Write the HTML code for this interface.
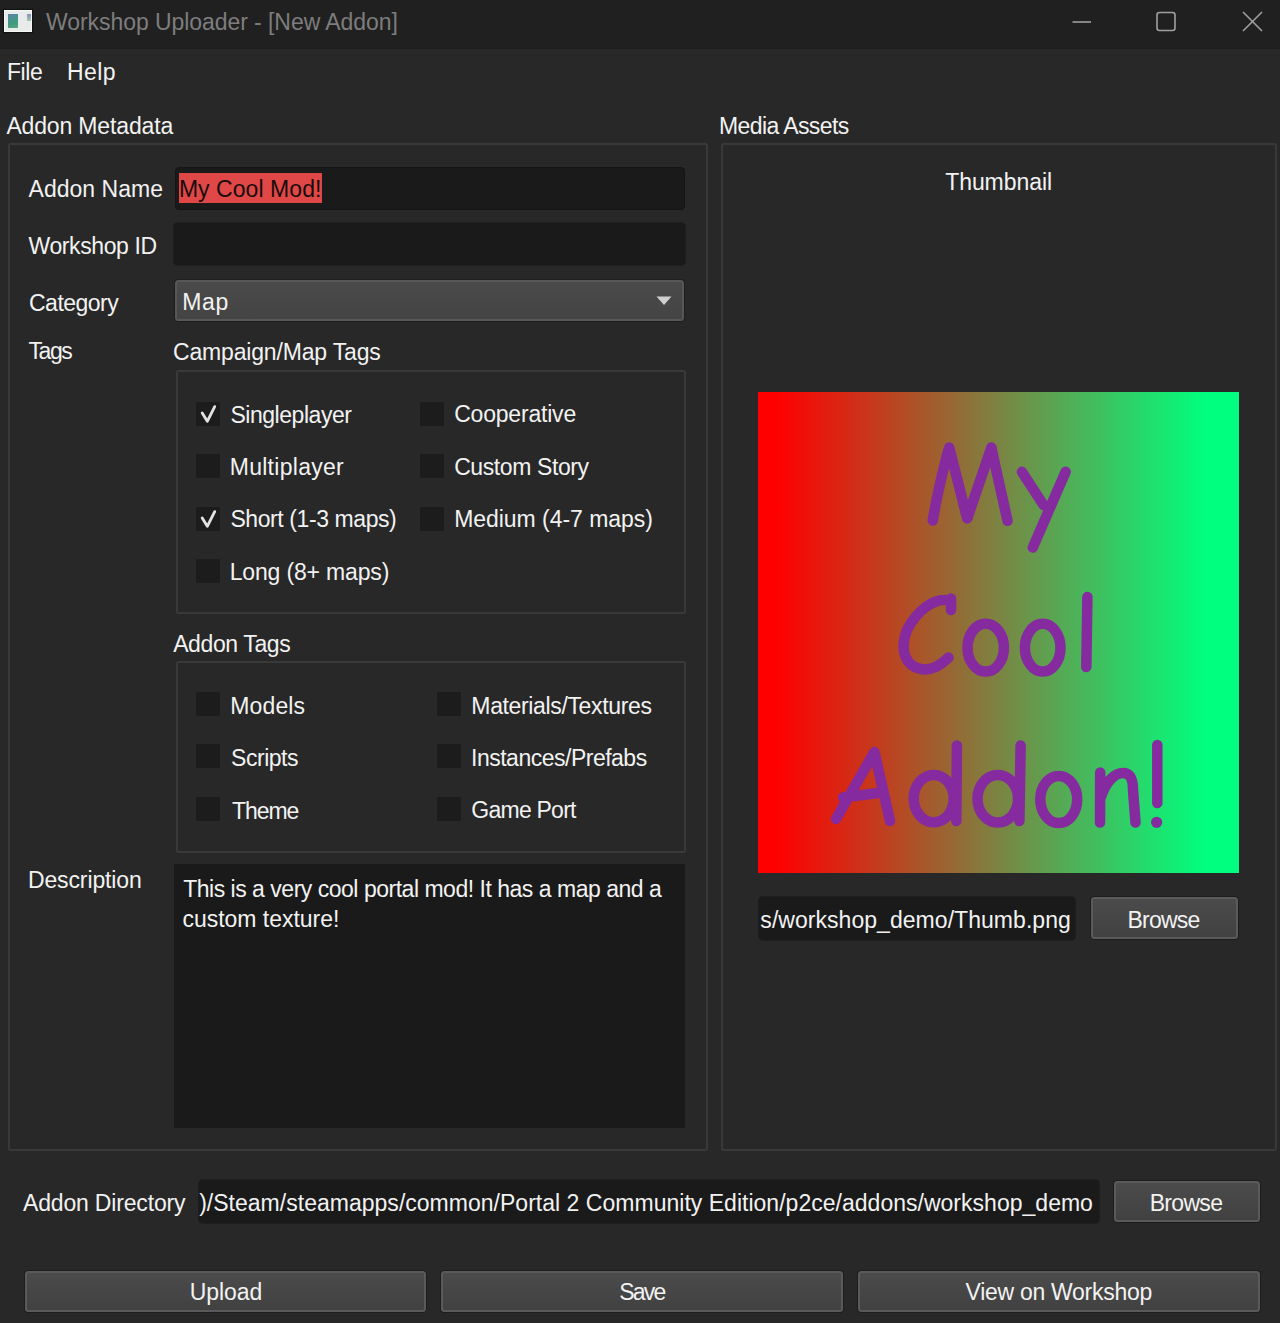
<!DOCTYPE html>
<html><head><meta charset="utf-8">
<style>
*{margin:0;padding:0;box-sizing:border-box}
html,body{width:1280px;height:1323px;overflow:hidden;background:#282828}
body{position:relative;font-family:"Liberation Sans",sans-serif;font-size:23px;color:#f2f2f2}
.a{position:absolute}
.t{position:absolute;white-space:pre;line-height:23px;height:23px}
#title{left:0;top:0;width:1280px;height:49px;background:#202020;border-bottom:1px solid #1c1c1c}
.grp{position:absolute;border:2px solid #393939;border-radius:2.5px}
.inp{position:absolute;background:#1a1a1a;border-radius:4px;box-shadow:0 0 0 1px #1e1e1e}
.btn{position:absolute;border:2px solid #5a5a5a;border-radius:3.5px;background:linear-gradient(#4b4b4b,#414141);box-shadow:0 0 0 1px #1d1d1d}
.cb{position:absolute;width:24px;height:24px;background:#1c1c1c;border-radius:1px}
.ck{position:absolute;left:0;top:0}
</style></head><body>
<div id="title" class="a"></div>
<div class="a" style="left:4.4px;top:9.6px;width:27.8px;height:22.5px;background:#e9eaea;border:1px solid #f6f8f6;box-shadow:0 0 1px 1px #121212"></div>
<div class="a" style="left:8px;top:14px;width:9.5px;height:13.8px;background:linear-gradient(160deg,#5a86a8,#3f9a80 60%,#5aa878)"></div>
<div class="a" style="left:27px;top:13.7px;width:4px;height:7.8px;background:linear-gradient(#8a90c8,#a8c8b0)"></div>
<svg class="a" style="left:1060px;top:0" width="220" height="48">
 <line x1="12.5" y1="22" x2="31" y2="22" stroke="#a0a0a0" stroke-width="1.6"/>
 <rect x="97" y="12.5" width="18" height="18" rx="2.5" fill="none" stroke="#a0a0a0" stroke-width="1.6"/>
 <line x1="183" y1="12" x2="202" y2="31" stroke="#a0a0a0" stroke-width="1.6"/>
 <line x1="202" y1="12" x2="183" y2="31" stroke="#a0a0a0" stroke-width="1.6"/>
</svg>

<div class="grp" style="left:8px;top:143px;width:700px;height:1008px"></div>
<div class="grp" style="left:721px;top:143px;width:556px;height:1008px"></div>

<div class="a" style="left:174.5px;top:166.5px;width:510.5px;height:43px;background:#1a1a1a;border:1.5px solid #131616;border-radius:4px"></div>
<div class="a" style="left:178.5px;top:173px;width:143px;height:30px;background:#e04848"></div>
<div class="inp" style="left:174px;top:222.5px;width:511px;height:42px"></div>

<div class="a" style="left:175px;top:280px;width:509px;height:41px;border:2px solid #575757;border-radius:3.5px;background:linear-gradient(#4a4a4a,#444);box-shadow:0 0 0 1px #1e1e1e"></div>
<svg class="a" style="left:655px;top:295px" width="18" height="12"><path d="M1.5 1.5 L16.5 1.5 L9 10 Z" fill="#cfcfcf"/></svg>

<div class="grp" style="left:175.5px;top:370px;width:510px;height:244px"></div>
<div class="cb" style="left:196px;top:402px"><svg class="ck" width="24" height="24"><path d="M6.2 10.9 L11.3 19.3 L18.7 4.6" fill="none" stroke="#e2e2e2" stroke-width="2.8" stroke-linecap="round" stroke-linejoin="round"/></svg></div>
<div class="cb" style="left:420px;top:402px"></div>
<div class="cb" style="left:196px;top:454px"></div>
<div class="cb" style="left:420px;top:454px"></div>
<div class="cb" style="left:196px;top:507px"><svg class="ck" width="24" height="24"><path d="M6.2 10.9 L11.3 19.3 L18.7 4.6" fill="none" stroke="#e2e2e2" stroke-width="2.8" stroke-linecap="round" stroke-linejoin="round"/></svg></div>
<div class="cb" style="left:420px;top:507px"></div>
<div class="cb" style="left:196px;top:559px"></div>

<div class="grp" style="left:175.5px;top:660.5px;width:510px;height:192.5px"></div>
<div class="cb" style="left:196px;top:692px"></div>
<div class="cb" style="left:437px;top:692px"></div>
<div class="cb" style="left:196px;top:744px"></div>
<div class="cb" style="left:437px;top:744px"></div>
<div class="cb" style="left:196px;top:797px"></div>
<div class="cb" style="left:437px;top:797px"></div>

<div class="a" style="left:174px;top:864px;width:511px;height:264px;background:#1a1a1a"></div>

<div class="a" style="left:758px;top:392px;width:481px;height:481px;background:linear-gradient(to right,#ff0000 4%,#00ff7f 93%)"></div>
<svg class="a" style="left:758px;top:392px" width="481" height="481" viewBox="758 392 481 481">
 <g fill="none" stroke="#852a9f" stroke-width="10.5" stroke-linecap="round" stroke-linejoin="round">
  <path d="M932.8 520.5 C936 500 944 465 949.2 447.5 L967.2 518.5 L991.4 447.5 C996 470 1003 500 1007.5 520.8"/>
  <path d="M1021.9 471.8 L1043.5 505 M1065.6 471.8 L1032.8 547.5"/>
  <path d="M951 598.5 L951 610 M949 600.5 C935 597 917 610 907 630 C899 650 905 668 925 669.5 C935 669.5 942 664 948.5 657.5"/>
  <ellipse cx="985.7" cy="647.7" rx="18.2" ry="23.9"/>
  <ellipse cx="1042.7" cy="647.7" rx="17.8" ry="23.9"/>
  <path d="M1087.4 597 L1086.3 667"/>
  <path d="M836 819 L874.4 752 L890 821 M843 797.5 L878 793"/>
  <ellipse cx="933.7" cy="798.6" rx="20" ry="23.6"/>
  <path d="M956.9 745.6 L956.3 821"/>
  <ellipse cx="997.75" cy="798.75" rx="20.25" ry="23.75"/>
  <path d="M1020.6 745.6 L1019.4 821"/>
  <ellipse cx="1058.75" cy="799.5" rx="18.45" ry="23.6"/>
  <path d="M1100.2 772.5 L1100 822.5 M1101 797 C1106 781 1115 773 1123 773 C1131 773 1133 780 1133 790 L1135.5 822.5"/>
  <path d="M1157.3 745 L1157.3 803"/>
 </g>
 <circle cx="1156.6" cy="822.3" r="5.6" fill="#852a9f"/>
</svg>

<div class="inp" style="left:759px;top:897px;width:316px;height:43px"></div>
<div class="btn" style="left:1091px;top:897px;width:147px;height:42px"></div>

<div class="inp" style="left:198.5px;top:1180px;width:900.5px;height:43px"></div>
<div class="btn" style="left:1114px;top:1181px;width:146px;height:41px"></div>

<div class="btn" style="left:25px;top:1271px;width:401px;height:41px"></div>
<div class="btn" style="left:441px;top:1271px;width:402px;height:41px"></div>
<div class="btn" style="left:858px;top:1271px;width:402px;height:41px"></div>
<div class="t" id="t0" style="left:46.00px;top:11.20px;letter-spacing:-0.063px;color:#7d7d7d">Workshop Uploader - [New Addon]</div>
<div class="t" id="t1" style="left:6.90px;top:60.80px;letter-spacing:-0.390px">File</div>
<div class="t" id="t2" style="left:66.88px;top:60.80px;letter-spacing:0.471px">Help</div>
<div class="t" id="t3" style="left:6.42px;top:114.75px;letter-spacing:-0.156px">Addon Metadata</div>
<div class="t" id="t4" style="left:718.95px;top:114.50px;letter-spacing:-0.591px">Media Assets</div>
<div class="t" id="t5" style="left:28.57px;top:178.25px;letter-spacing:0.013px">Addon Name</div>
<div class="t" id="t6" style="left:178.90px;top:178.25px;letter-spacing:0.056px;color:#1a0c0c">My Cool Mod!</div>
<div class="t" id="t7" style="left:28.57px;top:234.75px;letter-spacing:-0.405px">Workshop ID</div>
<div class="t" id="t8" style="left:29.00px;top:291.60px;letter-spacing:-0.507px">Category</div>
<div class="t" id="t9" style="left:182.15px;top:290.90px;letter-spacing:0.737px">Map</div>
<div class="t" id="t10" style="left:28.57px;top:339.75px;letter-spacing:-1.469px">Tags</div>
<div class="t" id="t11" style="left:173.00px;top:341.00px;letter-spacing:-0.171px">Campaign/Map Tags</div>
<div class="t" id="t12" style="left:230.40px;top:403.60px;letter-spacing:-0.456px">Singleplayer</div>
<div class="t" id="t13" style="left:454.15px;top:403.40px;letter-spacing:-0.198px">Cooperative</div>
<div class="t" id="t14" style="left:229.70px;top:456.00px;letter-spacing:0.286px">Multiplayer</div>
<div class="t" id="t15" style="left:454.15px;top:455.80px;letter-spacing:-0.397px">Custom Story</div>
<div class="t" id="t16" style="left:230.40px;top:508.40px;letter-spacing:-0.413px">Short (1-3 maps)</div>
<div class="t" id="t17" style="left:454.15px;top:508.20px;letter-spacing:-0.036px">Medium (4-7 maps)</div>
<div class="t" id="t18" style="left:229.70px;top:561.20px;letter-spacing:-0.159px">Long (8+ maps)</div>
<div class="t" id="t19" style="left:173.15px;top:632.60px;letter-spacing:-0.381px">Addon Tags</div>
<div class="t" id="t20" style="left:230.30px;top:694.60px;letter-spacing:0.126px">Models</div>
<div class="t" id="t21" style="left:471.35px;top:694.50px;letter-spacing:-0.357px">Materials/Textures</div>
<div class="t" id="t22" style="left:231.00px;top:747.20px;letter-spacing:-0.457px">Scripts</div>
<div class="t" id="t23" style="left:471.05px;top:746.90px;letter-spacing:-0.500px">Instances/Prefabs</div>
<div class="t" id="t24" style="left:232.00px;top:799.50px;letter-spacing:-1.060px">Theme</div>
<div class="t" id="t25" style="left:471.35px;top:799.20px;letter-spacing:-0.764px">Game Port</div>
<div class="t" id="t26" style="left:27.95px;top:869.00px;letter-spacing:-0.120px">Description</div>
<div class="t" id="t27" style="left:183.15px;top:878.30px;letter-spacing:-0.485px">This is a very cool portal mod! It has a map and a</div>
<div class="t" id="t28" style="left:182.45px;top:908.30px;letter-spacing:-0.020px">custom texture!</div>
<div class="t" id="t29" style="left:945.15px;top:170.60px;letter-spacing:-0.053px">Thumbnail</div>
<div class="t" id="t30" style="left:760.35px;top:909.00px;letter-spacing:0.044px">s/workshop_demo/Thumb.png</div>
<div class="t" id="t31" style="left:1127.50px;top:908.50px;letter-spacing:-0.770px">Browse</div>
<div class="t" id="t32" style="left:23.00px;top:1192.25px;letter-spacing:-0.172px">Addon Directory</div>
<div class="t" id="t33" style="left:199.15px;top:1192.25px;letter-spacing:0.019px">)/Steam/steamapps/common/Portal 2 Community Edition/p2ce/addons/workshop_demo</div>
<div class="t" id="t34" style="left:1149.72px;top:1192.25px;letter-spacing:-0.695px">Browse</div>
<div class="t" id="t35" style="left:189.73px;top:1281.00px;letter-spacing:-0.079px">Upload</div>
<div class="t" id="t36" style="left:619.20px;top:1281.00px;letter-spacing:-1.761px">Save</div>
<div class="t" id="t37" style="left:965.60px;top:1281.00px;letter-spacing:-0.287px">View on Workshop</div>
</body></html>
